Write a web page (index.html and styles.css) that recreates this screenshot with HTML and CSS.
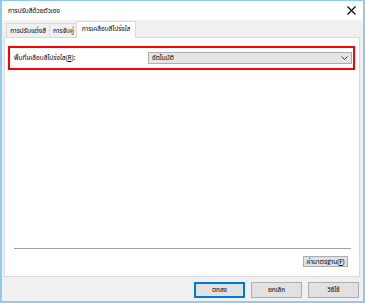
FILE: index.html
```html
<!DOCTYPE html>
<html lang="th">
<head>
<meta charset="utf-8">
<link rel="stylesheet" href="styles.css">
</head>
<body>
<div class="window">
  <div class="titlebar">
    <span class="title">การปรับสีด้วยตัวเอง</span>
    <svg class="close" width="9" height="9" viewBox="0 0 9 9"><path d="M0.5 0.5 L8.5 8.5 M8.5 0.5 L0.5 8.5" stroke="#000" stroke-width="1.1" fill="none"/></svg>
  </div>
  <div class="body">
    <div class="tabs">
      <div class="tab t1">การปรับแต่งสี</div>
      <div class="tab t2">การจับคู่</div>
      <div class="tab active">การเคลือบสีโปร่งใส</div>
    </div>
    <div class="panel">
      <div class="highlight">
        <span class="label">พื้นที่เคลือบสีโปร่งใส(<u>R</u>):</span>
        <div class="select">
          <span>อัตโนมัติ</span>
          <svg class="chev" width="7" height="4" viewBox="0 0 7 4"><path d="M0.5 0.5 L3.5 3.5 L6.5 0.5" stroke="#333" stroke-width="1" fill="none"/></svg>
        </div>
      </div>
      <div class="spacer"></div>
      <div class="sep"></div>
      <div class="defaults-row">
        <div class="btn small">ค่ามาตรฐาน(<u>F</u>)</div>
      </div>
    </div>
    <div class="buttons">
      <div class="btn big default">ตกลง</div>
      <div class="btn big">ยกเลิก</div>
      <div class="btn big">วิธีใช้</div>
    </div>
  </div>
</div>
</body>
</html>
```

FILE: styles.css
```css
html, body {
  margin: 0;
  padding: 0;
  background: #fff;
}
body {
  font-family: "Tahoma", "Leelawadee UI", "Noto Sans Thai", "Noto Sans Thai UI", "Loma", "Garuda", "Waree", "DejaVu Sans", sans-serif;
  font-size: 6.5px;
  color: #000;
  white-space: nowrap;
}
.window {
  width: 365px;
  height: 303px;
  box-sizing: border-box;
  border: 2px solid #8fcbf0;
  border-top-width: 1px;
  display: flex;
  flex-direction: column;
  background: #f0f0f0;
}
.titlebar {
  height: 19px;
  background: #fff;
  display: flex;
  align-items: center;
  padding: 0 6px 0 6px;
  flex: none;
}
.title {
  flex: 1;
  font-size: 6.5px;
}
.close {
  display: block;
  margin-right: 1px;
}
.body {
  flex: 1;
  display: flex;
  flex-direction: column;
  padding: 0 3px 0 2px;
}
.tabs {
  display: flex;
  align-items: flex-end;
  height: 17px;
  padding-left: 2px;
  position: relative;
  z-index: 1;
}
.tab {
  height: 14px;
  box-sizing: border-box;
  border: 1px solid #d9d9d9;
  border-bottom: none;
  background: #f0f0f0;
  display: flex;
  align-items: center;
  justify-content: center;
  margin-right: -1px;
  overflow: hidden;
}
.t1 { width: 44px; }
.t2 { width: 29px; }
.tab.active {
  width: 60px;
  height: 17px;
  margin-bottom: -1px;
  background: #fff;
  margin-left: -1px;
  padding-bottom: 2px;
}
.panel {
  height: 240px;
  box-sizing: border-box;
  border: 1px solid #d9d9d9;
  background: #fff;
  display: flex;
  flex-direction: column;
  padding: 8px 4px 9px 3px;
}
.highlight {
  height: 24px;
  box-sizing: border-box;
  border: 2px solid #ff0000;
  display: flex;
  align-items: center;
  padding: 0 1px 0 4px;
}
.label {
  flex: 1;
}
.select {
  width: 204px;
  height: 12px;
  box-sizing: border-box;
  border: 1px solid #adadad;
  background: #e5e5e5;
  display: flex;
  align-items: center;
  justify-content: space-between;
  padding: 0 3px 0 3px;
}
.chev { display: block; }
.spacer { flex: 1; }
.sep {
  height: 1px;
  background: #a0a0a0;
  margin: 0 4px 0 6px;
}
.defaults-row {
  display: flex;
  justify-content: flex-end;
  margin-top: 7px;
  padding-right: 7px;
}
.btn {
  box-sizing: border-box;
  border: 1px solid #adadad;
  background: #e1e1e1;
  display: flex;
  align-items: center;
  justify-content: center;
  overflow: hidden;
}
.btn.small {
  width: 45px;
  height: 11px;
}
.buttons {
  display: flex;
  justify-content: flex-end;
  gap: 6px;
  margin-top: 5px;
  padding-right: 1px;
}
.btn.big {
  width: 51px;
  height: 16px;
}
.btn.default {
  border: 2px solid #0078d7;
}
```
